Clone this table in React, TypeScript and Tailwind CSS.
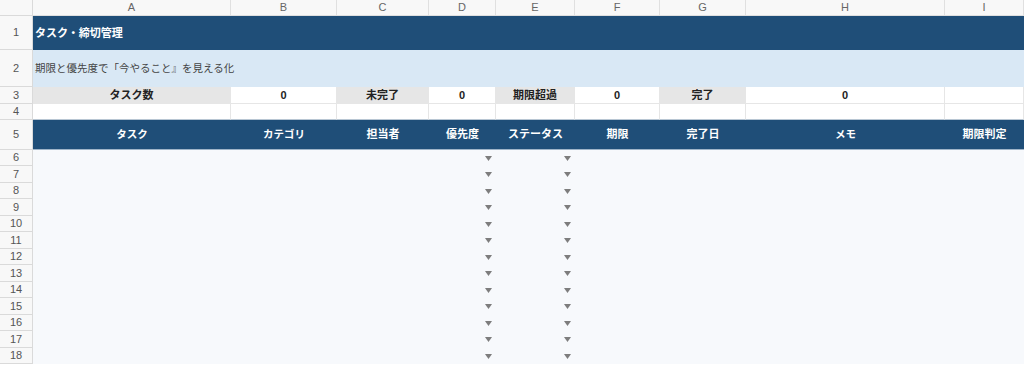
const cols = ["A", "B", "C", "D", "E", "F", "G", "H", "I"];

const headers = [
  { label: "タスク", cls: "text-[10.5px] font-semibold" },
  { label: "カテゴリ", cls: "text-[10.5px] font-semibold" },
  { label: "担当者", cls: "text-[11px] font-bold" },
  { label: "優先度", cls: "text-[11px] font-bold" },
  { label: "ステータス", cls: "text-[11px] font-semibold" },
  { label: "期限", cls: "text-[11px] font-bold" },
  { label: "完了日", cls: "text-[11px] font-bold" },
  { label: "メモ", cls: "text-[10.5px] font-semibold" },
  { label: "期限判定", cls: "text-[11px] font-bold" },
];

const summary: { text: string; label: boolean }[] = [
  { text: "タスク数", label: true },
  { text: "0", label: false },
  { text: "未完了", label: true },
  { text: "0", label: false },
  { text: "期限超過", label: true },
  { text: "0", label: false },
  { text: "完了", label: true },
  { text: "0", label: false },
  { text: "", label: false },
];

const dataRows = [6, 7, 8, 9, 10, 11, 12, 13, 14, 15, 16, 17, 18];

function RowHead({ n, h }: { n: number | string; h: string }) {
  return (
    <div
      className={`${h} flex items-center justify-center bg-[#f8f8f8] border-r border-b border-[#dadada] text-[11px] text-[#555]`}
    >
      {n}
    </div>
  );
}

function Arrow() {
  return (
    <svg width="7" height="5" viewBox="0 0 7 5" className="mr-[4px]">
      <path d="M0 0 L7 0 L3.5 5 Z" fill="#7d7d7d" />
    </svg>
  );
}

export default function App() {
  return (
    <div
      className="w-[1024px] h-[365px] overflow-hidden bg-white text-[#222]"
      style={{ fontFamily: '"Liberation Sans", "Noto Sans CJK JP", sans-serif' }}
    >
      <div className="grid grid-cols-[33px_198px_106px_92px_67px_79px_85px_86px_199px_79px]">
        {/* column letters */}
        <div className="h-[16px] bg-[#f8f8f8] border-r border-b border-[#dadada]" />
        {cols.map((c) => (
          <div
            key={c}
            className="h-[16px] flex items-center justify-center bg-[#f8f8f8] border-r border-b border-[#e0e0e0] text-[11px] text-[#666]"
          >
            {c}
          </div>
        ))}

        {/* row 1 */}
        <RowHead n={1} h="h-[34px]" />
        <div className="col-span-9 h-[34px] flex items-center pl-[2px] bg-[#1f4e78] text-white text-[11px] font-bold">
          タスク・締切管理
        </div>

        {/* row 2 */}
        <RowHead n={2} h="h-[37px]" />
        <div className="col-span-9 h-[37px] flex items-center pl-[2px] bg-[#d9e8f5] text-[#444] text-[10.5px]">
          期限と優先度で「今やること』を見える化
        </div>

        {/* row 3 */}
        <RowHead n={3} h="h-[17px]" />
        {summary.map((s, i) => (
          <div
            key={i}
            className={`h-[17px] flex items-center justify-center border-r border-b border-[#e6e6e6] text-[11px] font-bold ${
              s.label ? "bg-[#e6e6e6]" : "bg-white"
            }`}
          >
            {s.text}
          </div>
        ))}

        {/* row 4 */}
        <RowHead n={4} h="h-[16px]" />
        {cols.map((c) => (
          <div key={c} className="h-[16px] bg-white border-r border-b border-[#e6e6e6] border-b-[#b8c6d3]" />
        ))}

        {/* row 5 header */}
        <RowHead n={5} h="h-[30px]" />
        {headers.map((hd) => (
          <div
            key={hd.label}
            className={`h-[30px] flex items-center justify-center bg-[#1f4e78] text-white border-b border-[#9fb4c8] ${hd.cls}`}
          >
            {hd.label}
          </div>
        ))}

        {/* data rows */}
        {dataRows.map((n, idx) => {
          const h = idx % 2 === 0 ? "h-[16px]" : "h-[17px]";
          return [
            <RowHead key={`r${n}`} n={n} h={h} />,
            ...cols.map((c) => (
              <div
                key={`${n}${c}`}
                className={`${h} bg-[#f7f9fc] flex items-center justify-end`}
              >
                {(c === "D" || c === "E") && <Arrow />}
              </div>
            )),
          ];
        })}
      </div>
    </div>
  );
}
